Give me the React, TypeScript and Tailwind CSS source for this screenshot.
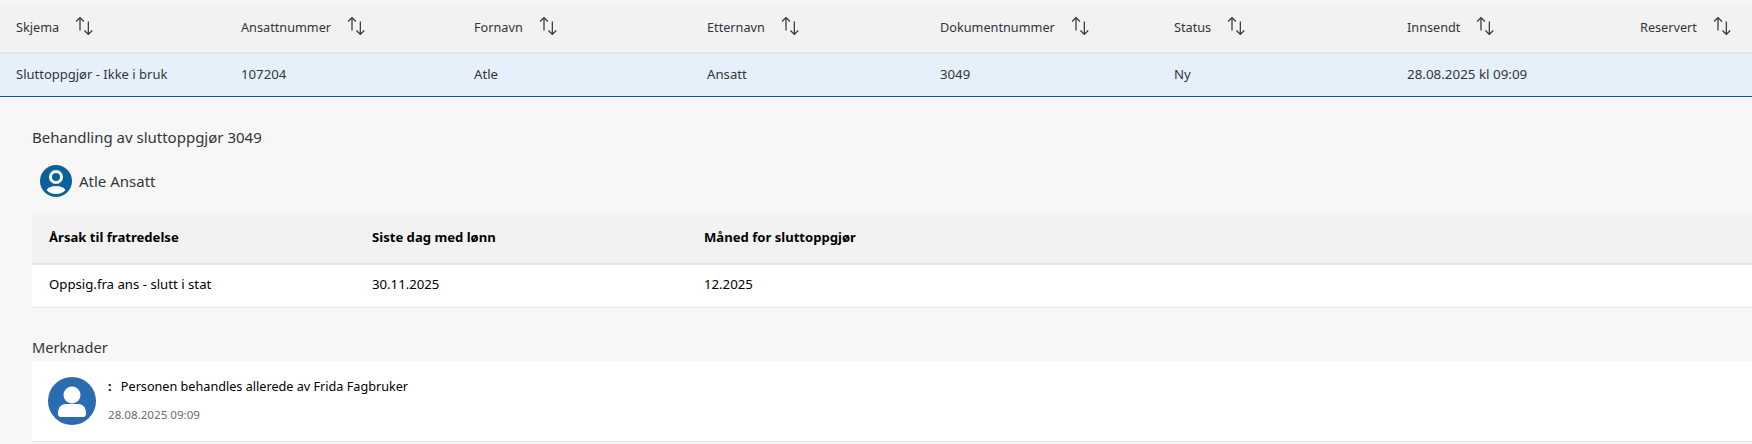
const font = { fontFamily: '"Noto Sans", sans-serif' };

function SortIcon() {
  return (
    <svg width="20" height="20" viewBox="0 0 18 18" fill="none" stroke="currentColor" strokeWidth="1.1" className="text-[#32363a]">
      <path d="M4.500 13V1.500M1 5l3.500-3.500L8 5" />
      <path d="M12 5v11.500M8.500 13l3.500 3.500 3.500-3.500" />
    </svg>
  );
}

const cols = [
  ["Skjema", "Sluttoppgjør - Ikke i bruk", "text-[13px]"],
  ["Ansattnummer", "107204", "text-[13.200px]"],
  ["Fornavn", "Atle", "text-[13.200px]"],
  ["Etternavn", "Ansatt", "text-[13.200px]"],
  ["Dokumentnummer", "3049", "text-[13.200px]"],
  ["Status", "Ny", "text-[13.200px]"],
  ["Innsendt", "28.08.2025 kl 09:09", "text-[13.400px] -mt-[2px]"],
];

export default function App() {
  return (
    <div style={font} className="w-[1752px] h-[444px] overflow-hidden bg-[#f7f7f7] pt-[3px] text-[#32363a]">
      <div className="grid grid-cols-[241px_233px_233px_233px_234px_233px_233px_1fr] h-[51px] items-center bg-[#f2f2f2] border-b-2 border-[#e5e5e5] text-[12.700px]">
        {cols.map(([h], i) => (
          <div key={h} className={i === 0 ? "flex items-center pl-4" : "flex items-center"}>
            <span>{h}</span>
            <span className="ml-[16px] -mt-[3px]"><SortIcon /></span>
          </div>
        ))}
        <div className="flex items-center">
          <span>Reservert</span>
          <span className="ml-[16px] -mt-[3px]"><SortIcon /></span>
        </div>
      </div>
      <div className="grid grid-cols-[241px_233px_233px_233px_234px_233px_233px_1fr] h-[43px] items-center bg-[#e5f0fa] border-b border-[#0854a0] text-[#32363a]">
        {cols.map(([h, v, c], i) => (
          <div key={h} className={i === 0 ? `pl-4 ${c}` : c}>{v}</div>
        ))}
        <div />
      </div>

      <div className="pl-8 pt-[30px]">
        <h2 className="text-[15px] leading-5 font-normal">Behandling av sluttoppgjør 3049</h2>
        <div className="flex items-center ml-2 mt-[18px] h-8">
          <svg width="32" height="32" viewBox="0 0 32 32" className="shrink-0">
            <circle cx="16" cy="16" r="16" fill="#0a6199" />
            <circle cx="16" cy="12" r="5.500" fill="none" stroke="#fff" strokeWidth="3" />
            <path d="M6.500 25c2-3 5.500-4 9.500-4s7.500 1 9.500 4c-2.400 2.600-5.500 4-9.500 4s-7.100-1.400-9.500-4z" fill="#fff" />
          </svg>
          <span className="ml-[7px] text-[15px]">Atle Ansatt</span>
        </div>

        <div className="mt-[18px] bg-[#f2f2f2] border-b-2 border-[#e5e5e5] h-[50px] grid grid-cols-[340px_332px_1fr] items-center text-[13.100px] font-bold text-black">
          <div className="pl-[17px] -mt-[2px]">Årsak til fratredelse</div>
          <div className="-mt-[2px]">Siste dag med lønn</div>
          <div className="-mt-[2px]">Måned for sluttoppgjør</div>
        </div>
        <div className="bg-white border-b border-[#e5e5e5] h-[43px] grid grid-cols-[340px_332px_1fr] items-center text-[13.200px] text-black">
          <div className="pl-[17px] -mt-[2px]">Oppsig.fra ans - slutt i stat</div>
          <div className="-mt-[2px]">30.11.2025</div>
          <div className="-mt-[2px]">12.2025</div>
        </div>

        <h3 className="mt-[29px] text-[14.600px] leading-5 font-normal">Merknader</h3>
        <div className="mt-[4px] bg-white border-b border-[#e5e5e5] h-[81px] flex pl-4 pt-4">
          <svg width="48" height="48" viewBox="0 0 48 48" className="shrink-0">
            <circle cx="24" cy="24" r="24" fill="#2b6cb0" />
            <circle cx="24" cy="18" r="8.500" fill="#fff" />
            <path d="M10 36c0-6 3.500-9 8-9h12c4.500 0 8 3 8 9v1c0 2-1 3-3 3H13c-2 0-3-1-3-3z" fill="#fff" />
          </svg>
          <div className="ml-[12px]">
            <div className="text-[12.650px] leading-4 text-black mt-[1px]"><b className="mr-[6px]">:</b> Personen behandles allerede av Frida Fagbruker</div>
            <div className="text-[11.600px] leading-4 text-[#6a6d70] mt-[13px]">28.08.2025 09:09</div>
          </div>
        </div>
      </div>
    </div>
  );
}
